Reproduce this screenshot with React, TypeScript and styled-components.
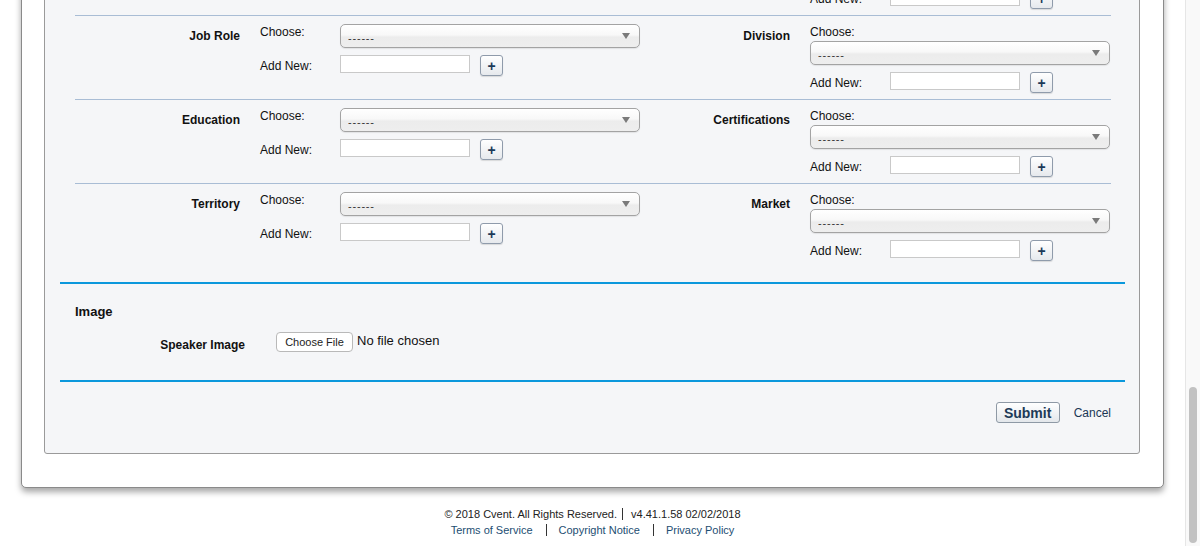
import React from 'react';
import styled, { createGlobalStyle } from 'styled-components';

const GlobalStyle = createGlobalStyle`
  html, body {
    margin: 0;
    padding: 0;
    background: #fff;
    overflow: hidden;
  }
  body {
    font-family: 'Liberation Sans', Arial, Helvetica, sans-serif;
    color: #111;
  }
`;

const Page = styled.div`
  display: flex;
  height: 546px;
  overflow: hidden;
`;

const Main = styled.div`
  flex: 1;
  display: flex;
  flex-direction: column;
  padding: 0 21px;
  min-width: 0;
`;

// the window is scrolled to the bottom, so the card starts above the viewport
const Card = styled.div`
  margin-top: -71px;
  background: #fff;
  border: 1px solid #8a8a8a;
  border-radius: 0 0 5px 5px;
  padding: 0 23px 33px 22px;
  box-shadow: 0 4px 6px rgba(0, 0, 0, 0.35);
`;

const Panel = styled.div`
  background: #f5f6f8;
  border: 1px solid #9a9a9a;
  border-radius: 0 0 3px 3px;
`;

const Rows = styled.div`
  margin: 0 28px 0 30px;
`;

const Row = styled.div`
  box-sizing: border-box;
  height: 84px;
  border-top: 1px solid #a9bdd5;
  padding-top: 8px;
  display: flex;
`;

const Half = styled.div<{ $width?: number }>`
  display: flex;
  align-items: flex-start;
  ${(p) => (p.$width ? `width: ${p.$width}px;` : 'flex: 1;')}
`;

const FieldLabel = styled.div<{ $width: number }>`
  width: ${(p) => p.$width}px;
  margin-right: 20px;
  text-align: right;
  font-weight: bold;
  font-size: 12px;
  line-height: 14px;
  padding-top: 5px;
  color: #111;
`;

const Fields = styled.div`
  display: flex;
  flex-direction: column;
`;

const FieldLine = styled.div<{ $gap?: number }>`
  display: flex;
  align-items: flex-start;
  margin-top: ${(p) => p.$gap ?? 0}px;
`;

const SubLabel = styled.div<{ $width?: number; $lh?: number; $pad?: number }>`
  ${(p) => (p.$width ? `width: ${p.$width}px;` : '')}
  box-sizing: border-box;
  padding-top: ${(p) => p.$pad ?? 1}px;
  font-size: 12px;
  line-height: ${(p) => p.$lh ?? 14}px;
  color: #111;
`;

const ChooseAbove = styled(SubLabel)`
  margin-bottom: 2px;
`;

const SelectWrap = styled.div`
  position: relative;
  width: 300px;
  height: 24px;
`;

const Select = styled.select`
  appearance: none;
  -webkit-appearance: none;
  box-sizing: border-box;
  width: 100%;
  height: 100%;
  margin: 0;
  border: 1px solid #a3a3a3;
  border-radius: 5px;
  padding: 3px 24px 0 7px;
  font-family: 'Liberation Sans', Arial, sans-serif;
  font-size: 11px;
  letter-spacing: 0.8px;
  color: #333;
  background: linear-gradient(#ffffff 0%, #f8f8f8 45%, #ececec 55%, #eeeeee 100%);
  box-shadow: 0 1px 1px rgba(0, 0, 0, 0.08);
  outline: none;
`;

const Arrow = styled.svg`
  position: absolute;
  right: 10px;
  top: 9px;
  pointer-events: none;
`;

const TextInput = styled.input`
  box-sizing: border-box;
  width: 130px;
  height: 18px;
  margin: 0;
  border: 1px solid #c9c9c9;
  background: #fff;
  padding: 0 3px;
  outline: none;
`;

const PlusButton = styled.button`
  box-sizing: border-box;
  width: 23px;
  height: 21px;
  margin: 0 0 0 10px;
  padding: 0;
  border: 1px solid #8f9bab;
  border-radius: 3px;
  background: linear-gradient(#ffffff, #e6e9ed);
  color: #1c3a58;
  font-family: 'Liberation Sans', Arial, sans-serif;
  font-weight: bold;
  font-size: 14px;
  line-height: 18px;
  box-shadow: 0 1px 1px rgba(0, 0, 0, 0.12);
`;

const BlueRule = styled.div<{ $top?: number }>`
  height: 2px;
  background: #0b98dc;
  margin: ${(p) => p.$top ?? 0}px 14px 0 15px;
`;

const ImageSection = styled.div`
  padding: 20px 30px 28px 30px;
`;

const SectionTitle = styled.div`
  font-weight: bold;
  font-size: 13px;
  line-height: 16px;
  color: #111;
`;

const FileRow = styled.div`
  display: flex;
  align-items: flex-start;
  margin-top: 12px;
`;

const FileLabel = styled(FieldLabel)`
  padding-top: 6px;
  margin-right: 31px;
`;

const FileButton = styled.button`
  box-sizing: border-box;
  width: 77px;
  height: 20px;
  margin: 0;
  padding: 0;
  border: 1px solid #b9b9b9;
  border-radius: 4px;
  background: #fff;
  font-family: 'Liberation Sans', Arial, sans-serif;
  font-size: 11px;
  color: #222;
`;

const FileStatus = styled.span`
  font-size: 13px;
  line-height: 18px;
  margin-left: 4px;
  color: #111;
`;

const Actions = styled.div`
  display: flex;
  justify-content: flex-end;
  align-items: center;
  padding: 20px 28px 30px 0;
`;

const SubmitButton = styled.button`
  box-sizing: border-box;
  width: 64px;
  height: 21px;
  margin: 0;
  padding: 0;
  border: 1px solid #8e99a5;
  border-radius: 3px;
  background: linear-gradient(#ffffff, #e3e7eb);
  font-family: 'Liberation Sans', Arial, sans-serif;
  font-weight: bold;
  font-size: 14px;
  color: #1d3a57;
`;

const CancelLink = styled.a`
  margin-left: 14px;
  font-size: 12px;
  color: #1b3755;
  text-decoration: none;
`;

const Footer = styled.div`
  margin-top: 18px;
  text-align: center;
  font-size: 11px;
  color: #222;
`;

const FooterLine = styled.div`
  display: flex;
  justify-content: center;
  align-items: center;
  height: 16px;
`;

const Divided = styled.span`
  border-left: 1px solid #333;
  padding-left: 8px;
  margin-left: 5px;
  line-height: 12px;
`;

const FooterLink = styled.a<{ $first?: boolean }>`
  color: #1d4e72;
  text-decoration: none;
  line-height: 12px;
  ${(p) => (p.$first ? '' : 'border-left: 1px solid #333; padding-left: 12px; margin-left: 13px;')}
`;

const ScrollTrack = styled.div`
  width: 15px;
  border-left: 1px solid #e6e6e6;
  background: #f9f9f9;
  display: flex;
  flex-direction: column;
  justify-content: flex-end;
  padding-bottom: 3px;
  box-sizing: border-box;
`;

const ScrollThumb = styled.div`
  width: 8px;
  height: 156px;
  margin-left: 3px;
  border-radius: 4px;
  background: #c2c2c2;
`;

type Pair = { left: string; right: string };

const rows: Pair[] = [
  { left: 'Department', right: 'Industry' },
  { left: 'Job Role', right: 'Division' },
  { left: 'Education', right: 'Certifications' },
  { left: 'Territory', right: 'Market' },
];

function Dropdown() {
  return (
    <SelectWrap>
      <Select defaultValue="">
        <option value="">------</option>
      </Select>
      <Arrow width="8" height="6" viewBox="0 0 8 6">
        <path d="M0 0 L8 0 L4 6 Z" fill="#7a7a7a" />
      </Arrow>
    </SelectWrap>
  );
}

function AddNew() {
  return (
    <FieldLine $gap={7}>
      <SubLabel $width={80} $lh={18} $pad={2}>Add New:</SubLabel>
      <TextInput type="text" />
      <PlusButton type="button">+</PlusButton>
    </FieldLine>
  );
}

function LookupRow({ left, right }: Pair) {
  return (
    <Row>
      <Half $width={565}>
        <FieldLabel $width={165}>{left}</FieldLabel>
        <Fields>
          <FieldLine>
            <SubLabel $width={80}>Choose:</SubLabel>
            <Dropdown />
          </FieldLine>
          <AddNew />
        </Fields>
      </Half>
      <Half>
        <FieldLabel $width={150}>{right}</FieldLabel>
        <Fields>
          <ChooseAbove>Choose:</ChooseAbove>
          <Dropdown />
          <AddNew />
        </Fields>
      </Half>
    </Row>
  );
}

export default function App() {
  return (
    <>
      <GlobalStyle />
      <Page>
        <Main>
          <Card>
            <Panel>
              <Rows>
                {rows.map((r) => (
                  <LookupRow key={r.left} {...r} />
                ))}
              </Rows>
              <BlueRule $top={15} />
              <ImageSection>
                <SectionTitle>Image</SectionTitle>
                <FileRow>
                  <FileLabel $width={170}>Speaker Image</FileLabel>
                  <FileButton type="button">Choose File</FileButton>
                  <FileStatus>No file chosen</FileStatus>
                </FileRow>
              </ImageSection>
              <BlueRule />
              <Actions>
                <SubmitButton type="button">Submit</SubmitButton>
                <CancelLink href="#">Cancel</CancelLink>
              </Actions>
            </Panel>
          </Card>
          <Footer>
            <FooterLine>
              <span>© 2018 Cvent. All Rights Reserved.</span>
              <Divided>v4.41.1.58 02/02/2018</Divided>
            </FooterLine>
            <FooterLine>
              <FooterLink $first href="#">Terms of Service</FooterLink>
              <FooterLink href="#">Copyright Notice</FooterLink>
              <FooterLink href="#">Privacy Policy</FooterLink>
            </FooterLine>
          </Footer>
        </Main>
        <ScrollTrack>
          <ScrollThumb />
        </ScrollTrack>
      </Page>
    </>
  );
}
